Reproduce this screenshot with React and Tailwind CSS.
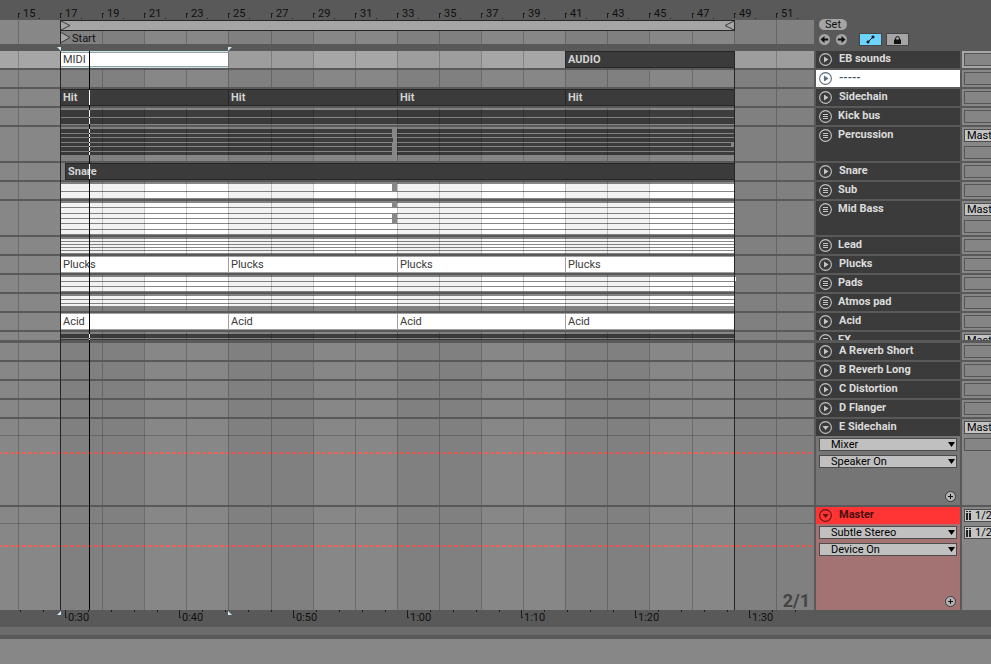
import React from "react";
import clsx from "clsx";

// Arrangement zoom: pixels per bar and where bar 17 sits
const BAR_WIDTH = 21.05;
const LOOP_START = 17;
const LOOP_END = 49;
const PLAYHEAD = 89;

const xOf = (bar) => Math.round(60 + (bar - LOOP_START) * BAR_WIDTH);
const spanOf = (from, to) => xOf(to) - xOf(from);

const BARS = [15, 17, 19, 21, 23, 25, 27, 29, 31, 33, 35, 37, 39, 41, 43, 45, 47, 49, 51];

const PHRASES = [
  [17, 25],
  [25, 33],
  [33, 41],
  [41, 49],
];

const phraseClips = (name, dark) =>
  PHRASES.map(([from, to]) => ({ name, dark, left: xOf(from), right: xOf(to) }));

// lanes: [height, hole start, hole end, lane end] - the hole is an empty stretch in the lane
const TRACKS = [
  {
    name: "EB sounds",
    highlighted: true,
    clips: [
      { name: "MIDI", left: xOf(17), right: xOf(25), picked: true },
      { name: "AUDIO", left: xOf(41), right: xOf(49), dark: true },
    ],
  },
  { name: "-----", selected: true },
  { name: "Sidechain", clips: phraseClips("Hit", true) },
  { name: "Kick bus", group: true, dark: true, lanes: [[7], [6]] },
  {
    name: "Percussion",
    group: true,
    tall: true,
    dark: true,
    routing: "Master",
    lanes: [[4, 392, 397], [3, 392, 397], [4, 393, 397], [3, 392, 397, 731], [4, 392, 397], [3, 392, 397]],
  },
  { name: "Snare", clips: [{ name: "Snare", left: 65, right: xOf(49), dark: true }] },
  { name: "Sub", group: true, lanes: [[7, 392, 397], [6]] },
  {
    name: "Mid Bass",
    group: true,
    tall: true,
    routing: "Master",
    lanes: [[4, 392, 397], [5], [4, 392, 397], [4, 392, 397], [5], [4]],
  },
  { name: "Lead", group: true, lanes: [[2], [2], [2], [2], [2]] },
  { name: "Plucks", clips: phraseClips("Plucks", false) },
  { name: "Pads", group: true, lanes: [[4, 0, 0, 736], [4], [4]] },
  { name: "Atmos pad", group: true, lanes: [[3], [3], [2]] },
  { name: "Acid", clips: phraseClips("Acid", false) },
  { name: "FX", group: true, dark: true, cut: true, routing: "Master", lanes: [[4], [4]] },
];

const RETURNS = ["A Reverb Short", "B Reverb Long", "C Distortion", "D Flanger"];

const TIMES = ["0:30", "0:40", "0:50", "1:00", "1:10", "1:20", "1:30"];

const TrackIcon = ({ kind }) => (
  <svg width="13" height="13" viewBox="0 0 13 13" fill="none" stroke="currentColor" className="opacity-85">
    <circle cx="6.5" cy="6.5" r="5.9" strokeWidth="1.1" />
    {kind === "play" && <path d="M5 3.5v6l4.5-3z" fill="currentColor" stroke="none" />}
    {kind === "group" && <path d="M4 4.5h5M4 6.5h5M4 8.5h5" />}
    {kind === "open" && <path d="M3.4 5h6.4L6.6 9z" fill="currentColor" stroke="none" />}
  </svg>
);

const PlusIcon = () => (
  <svg width="11" height="11" viewBox="0 0 11 11">
    <circle cx="5.5" cy="5.5" r="5" fill="#b4b4b4" stroke="#3b3b3b" />
    <path d="M5.5 3v5M3 5.5h5" stroke="#111" />
  </svg>
);

// Alternating four bar shading with a line every two bars
const Grid = () => (
  <div className="absolute inset-0 flex pointer-events-none">
    <div className="w-[18px] shrink-0" />
    {BARS.map((bar) => (
      <div
        key={bar}
        className={clsx(
          "shrink-0 border-l border-black/20 last:flex-1",
          bar >= LOOP_START && (bar - LOOP_START) % 8 < 4 && "bg-black/5"
        )}
        style={{ width: spanOf(bar, bar + 2) }}
      />
    ))}
  </div>
);

const PlayheadMark = ({ from }) => (
  <span
    className="absolute inset-y-0 z-30 w-px bg-white"
    style={{ left: PLAYHEAD - from }}
  />
);

const Clip = ({ clip, gap }) => (
  <div
    className={clsx(
      "relative h-full shrink-0 overflow-hidden whitespace-nowrap border-y pl-[3px] leading-[15px]",
      clip.dark
        ? "bg-[#3b3b3b] border-[#262626] font-bold text-[#d2d2d2] shadow-[inset_1px_0_0_#262626]"
        : "bg-white text-[#3a3a3a]",
      !clip.dark && !clip.picked && "border-[#a0a0a0] shadow-[inset_1px_0_0_#a0a0a0]",
      clip.picked && "border-[#c5e4f2] shadow-[inset_0_1px_0_#a0a0a0,inset_0_-1px_0_#a0a0a0]"
    )}
    style={{ width: clip.right - clip.left, marginLeft: gap }}
  >
    {clip.name}
    {clip.dark && clip.left < PLAYHEAD && <PlayheadMark from={clip.left} />}
  </div>
);

const Lane = ({ lane, dark }) => {
  const [height, holeStart, holeEnd, end = xOf(LOOP_END)] = lane;
  const start = xOf(LOOP_START);
  const fill = dark ? "bg-[#3d3d3d]" : "bg-white";
  return (
    <div className="relative flex shrink-0" style={{ height, marginLeft: start }}>
      {holeStart ? (
        <>
          <div className={fill} style={{ width: holeStart - start }} />
          <div style={{ width: holeEnd - holeStart }} />
          <div className={fill} style={{ width: end - holeEnd }} />
        </>
      ) : (
        <div className={fill} style={{ width: end - start }} />
      )}
      {dark && <PlayheadMark from={start} />}
    </div>
  );
};

const Timeline = ({ track }) => (
  <div
    className={clsx(
      "relative min-w-0 flex-1 overflow-hidden",
      track.highlighted ? "bg-[#a6a6a6]" : "bg-[#878787]"
    )}
  >
    {track.lanes && (
      <div className="flex flex-col gap-px pt-[2px]">
        {track.lanes.map((lane, i) => (
          <Lane key={i} lane={lane} dark={track.dark} />
        ))}
      </div>
    )}
    <Grid />
    {track.clips && (
      <div className="relative flex h-full">
        {track.clips.map((clip, i) => (
          <Clip
            key={clip.left}
            clip={clip}
            gap={clip.left - (i ? track.clips[i - 1].right : 0)}
          />
        ))}
      </div>
    )}
  </div>
);

const TrackHeader = ({ name, kind, className }) => (
  <div className={clsx("flex h-[17px] items-start pl-[3px] font-bold leading-[15px]", className)}>
    <button type="button" aria-label={`Unfold ${name}`} className="pt-[2px]">
      <TrackIcon kind={kind} />
    </button>
    <span className={clsx("whitespace-nowrap", kind === "group" ? "pl-[6px]" : "pl-[7px]")}>
      {name}
    </span>
  </div>
);

const RoutingSelect = ({ label, value }) => (
  <select
    aria-label={label}
    defaultValue={value}
    className="block h-[13px] w-16 shrink-0 appearance-none border border-[#4c4c4c] bg-[#c4c4c4] pl-[2px] leading-[11px] text-black"
  >
    <option>{value}</option>
  </select>
);

const EmptySlot = () => (
  <div className="h-[13px] w-16 shrink-0 border border-[#555555] bg-[#858585]" />
);

const Io = ({ highlighted, children }) => (
  <div
    className={clsx(
      "flex w-[29px] shrink-0 flex-col gap-1 overflow-hidden pl-[2px] pt-[2px]",
      highlighted ? "bg-[#a6a6a6]" : "bg-[#878787]"
    )}
  >
    {children}
  </div>
);

const TrackRow = ({ track }) => (
  <div
    className={clsx(
      "flex gap-[2px] overflow-hidden",
      track.cut ? "h-[8px]" : track.tall ? "h-[34px]" : "h-[17px]"
    )}
  >
    <Timeline track={track} />
    <div
      className={clsx(
        "w-36 shrink-0",
        track.selected ? "bg-white text-[#3f5468]" : "bg-[#3b3b3b] text-[#dcdcdc]"
      )}
    >
      <TrackHeader name={track.name} kind={track.group ? "group" : "play"} />
    </div>
    <Io highlighted={track.highlighted}>
      {track.routing && <RoutingSelect label={`${track.name} output`} value={track.routing} />}
      {!track.cut && (!track.routing || track.tall) && <EmptySlot />}
    </Io>
  </div>
);

const DeviceSelect = ({ label, value }) => (
  <div className="relative">
    <select
      aria-label={label}
      defaultValue={value}
      className="block h-[13px] w-full appearance-none border border-[#4c4c4c] bg-[#c0c0c0] pl-[11px] leading-[11px] text-black"
    >
      <option>{value}</option>
    </select>
    <svg width="7" height="5" viewBox="0 0 7 5" className="pointer-events-none absolute right-[2px] top-1">
      <path d="M0 0h7L3.5 5z" />
    </svg>
  </div>
);

// An unfolded track with its automation lane
const AutomationRow = ({ name, devices, body, header, height, envelope, io, children }) => (
  <div className={clsx("flex gap-[2px]", height)}>
    <div className="relative min-w-0 flex-1 overflow-hidden bg-[#878787]">
      <div className="h-[17px] border-b border-black/20" />
      <div
        className={clsx(
          "h-[2px] bg-[repeating-linear-gradient(90deg,#e8635b_0px,#e8635b_2px,transparent_2px,transparent_4px,#e8635b_4px,#e8635b_6px)]",
          envelope
        )}
      />
      <Grid />
      {children}
    </div>
    <div className={clsx("flex w-36 shrink-0 flex-col", body)}>
      <TrackHeader name={name} kind="open" className={header} />
      <div className="flex flex-1 flex-col gap-1 px-[3px] pb-[3px] pt-[2px]">
        {devices.map((device, i) => (
          <DeviceSelect key={device} label={`${name} automation ${i + 1}`} value={device} />
        ))}
        <button type="button" aria-label="Add automation lane" className="mr-px mt-auto self-end">
          <PlusIcon />
        </button>
      </div>
    </div>
    <Io>{io}</Io>
  </div>
);

const OutputSelect = ({ label }) => (
  <div className="relative">
    <select
      aria-label={label}
      defaultValue="1/2"
      className="block h-[13px] w-16 appearance-none border border-[#4c4c4c] bg-[#c4c4c4] pl-[10px] leading-[11px] text-black"
    >
      <option>1/2</option>
    </select>
    <svg width="5" height="9" viewBox="0 0 5 9" className="pointer-events-none absolute left-[2px] top-[2px]">
      <path d="M0 0h2v1H0zM3 0h2v1H3zM0 2h2v7H0zM3 2h2v7H3z" fill="#222" />
    </svg>
  </div>
);

const BarRuler = () => (
  <div className="flex h-5 overflow-hidden text-[#0f0f0f]">
    <div className="w-[18px] shrink-0" />
    {BARS.map((bar) => (
      <div key={bar} className="flex shrink-0 items-end" style={{ width: spanOf(bar, bar + 2) }}>
        <span className="mb-[2px] h-[5px] w-[2px] border-l border-t border-[#1c1c1c]" />
        <span className="w-[19px] pl-[3px] leading-[13px]">{bar}</span>
        <span className="mb-[1px] h-px w-px bg-[#1c1c1c]" />
      </div>
    ))}
  </div>
);

const LoopBrace = () => (
  <div className="relative h-6 overflow-hidden bg-[#878787]">
    <Grid />
    <div
      className="relative ml-[60px] flex h-[11px] justify-between border border-[#262626] bg-[#a5a5a5]"
      style={{ width: spanOf(LOOP_START, LOOP_END) + 1 }}
    >
      <svg width="10" height="9" viewBox="0 0 10 9" fill="none" stroke="#3b3b3b">
        <path d="M0 0l9 4.5L0 9" />
      </svg>
      <svg width="10" height="9" viewBox="0 0 10 9" fill="none" stroke="#3b3b3b">
        <path d="M10 0L1 4.5 10 9" />
      </svg>
    </div>
    <div className="relative ml-[60px] flex h-[13px] items-center border-l border-[#262626] text-[#0f0f0f]">
      <svg width="11" height="11" viewBox="0 0 11 11" fill="#a5a5a5" stroke="#3b3b3b">
        <path d="M0 .5l9 5-9 5" />
      </svg>
      <span className="leading-[15px] pt-[2px]">Start</span>
    </div>
  </div>
);

// Light corners that show the time selection
const SelectionCorners = ({ bottom }) => (
  <svg width="175" height="4" viewBox="0 0 175 4" fill="#c9ecfb" className="ml-[57px] block">
    {bottom ? <path d="M4 0v4H0zM171 0v4h4z" /> : <path d="M0 0h4v4zM171 0h4l-4 4z" />}
  </svg>
);

const Controls = () => (
  <div className="w-[175px] shrink-0 pl-[3px] pt-[19px]">
    <button type="button" className="block h-[11px] w-7 rounded-full bg-[#a5a5a5] leading-[11px] text-[#111]">
      Set
    </button>
    <div className="mt-[3px] flex h-[13px] items-center">
      <button type="button" aria-label="Previous locator">
        <svg width="11" height="11" viewBox="0 0 11 11">
          <circle cx="5.5" cy="5.5" r="5.5" fill="#a5a5a5" />
          <path d="M1.5 5.5L5.5 2V4.6H9.2v1.8H5.5V9z" fill="#111" />
        </svg>
      </button>
      <button type="button" aria-label="Next locator" className="ml-[6px]">
        <svg width="11" height="11" viewBox="0 0 11 11">
          <circle cx="5.5" cy="5.5" r="5.5" fill="#a5a5a5" />
          <path d="M9.5 5.5L5.5 2V4.6H1.8v1.8h3.7V9z" fill="#111" />
        </svg>
      </button>
      <button
        type="button"
        aria-label="Automation mode"
        className="ml-3 flex h-[13px] w-[23px] items-center justify-center border border-[#454545] bg-[#6cd5ff]"
      >
        <svg width="9" height="9" viewBox="0 0 9 9" fill="#111" stroke="#111">
          <circle cx="2" cy="7" r="1.1" />
          <circle cx="7" cy="2" r="1.1" />
          <path d="M2 7l5-5" />
        </svg>
      </button>
      <button
        type="button"
        aria-label="Lock envelopes"
        className="ml-1 flex h-[13px] w-[23px] items-center justify-center border border-[#454545] bg-[#a5a5a5]"
      >
        <svg width="7" height="8" viewBox="0 0 7 8" fill="none">
          <path d="M1.5 4V2.6a2 2 0 0 1 4 0V4" stroke="#111" />
          <path d="M0 3.5h7V8H0z" fill="#111" />
        </svg>
      </button>
    </div>
  </div>
);

const TimeRuler = () => (
  <div className="relative h-[17px] overflow-hidden text-[#0f0f0f]">
    <div className="absolute left-0 top-[1px]">
      <SelectionCorners bottom />
    </div>
    <div className="flex">
      <div className="flex w-[65px] shrink-0 gap-[22px] pl-[20px]">
        <span className="h-[2px] w-px bg-[#1c1c1c]" />
        <span className="h-[2px] w-px bg-[#1c1c1c]" />
      </div>
      {TIMES.map((time, i) => (
        <div key={time} className="relative flex w-[114px] shrink-0">
          <span className="h-[8px] w-[2px] border-b border-l border-[#1c1c1c]" />
          <span className="pl-[1px] pt-[1px] leading-[13px]">{time}</span>
          <div className="absolute left-[23px] top-0 flex gap-[22px]">
            {[1, 2, 3, 4].slice(0, i === TIMES.length - 1 ? 2 : 4).map((tick) => (
              <span key={tick} className="h-[2px] w-px bg-[#1c1c1c]" />
            ))}
          </div>
        </div>
      ))}
    </div>
  </div>
);

const App = () => (
  <div className="flex min-h-screen flex-col overflow-hidden bg-[#595959] font-['Roboto','Liberation_Sans',sans-serif] text-[11px]">
    <header className="flex h-[51px] gap-[2px]">
      <div className="min-w-0 flex-1">
        <BarRuler />
        <LoopBrace />
        <div className="pt-[3px]">
          <SelectionCorners />
        </div>
      </div>
      <Controls />
    </header>

    <main className="relative flex flex-col gap-[3px]">
      <section className="flex flex-col gap-[2px]">
        {TRACKS.map((track) => (
          <TrackRow key={track.name} track={track} />
        ))}
      </section>

      <section className="flex flex-col gap-[2px]">
        {RETURNS.map((name) => (
          <TrackRow key={name} track={{ name }} />
        ))}
        <AutomationRow
          name="E Sidechain"
          devices={["Mixer", "Speaker On"]}
          height="h-[86px]"
          envelope="mt-4"
          header="bg-[#3b3b3b] text-[#dcdcdc]"
          body="bg-[#757575]"
          io={
            <>
              <RoutingSelect label="E Sidechain output" value="Master" />
              <EmptySlot />
            </>
          }
        />
        <AutomationRow
          name="Master"
          devices={["Subtle Stereo", "Device On"]}
          height="h-[103px]"
          envelope="mt-[21px]"
          header="bg-[#ff3535] text-[#4a0f0f]"
          body="bg-[#a37272]"
          io={
            <>
              <OutputSelect label="Cue out" />
              <OutputSelect label="Master out" />
            </>
          }
        >
          <span className="absolute bottom-0 right-1 text-[18px] font-bold leading-[18px] text-[#444444]">
            2/1
          </span>
        </AutomationRow>
      </section>

      {/* Loop boundaries and playhead run over every track */}
      <div className="pointer-events-none absolute inset-0 z-20">
        <span className="absolute inset-y-0 w-px bg-[#262626]" style={{ left: xOf(LOOP_START) }} />
        <span className="absolute inset-y-0 w-px bg-[#262626]" style={{ left: xOf(LOOP_END) }} />
        <span className="absolute inset-y-0 w-px bg-black" style={{ left: PLAYHEAD }} />
      </div>
    </main>

    <TimeRuler />
    <div className="h-2 bg-[#6c6c6c]" />
    <footer className="mt-1 min-h-[25px] flex-1 bg-[#878787]" />
  </div>
);

export default App;
